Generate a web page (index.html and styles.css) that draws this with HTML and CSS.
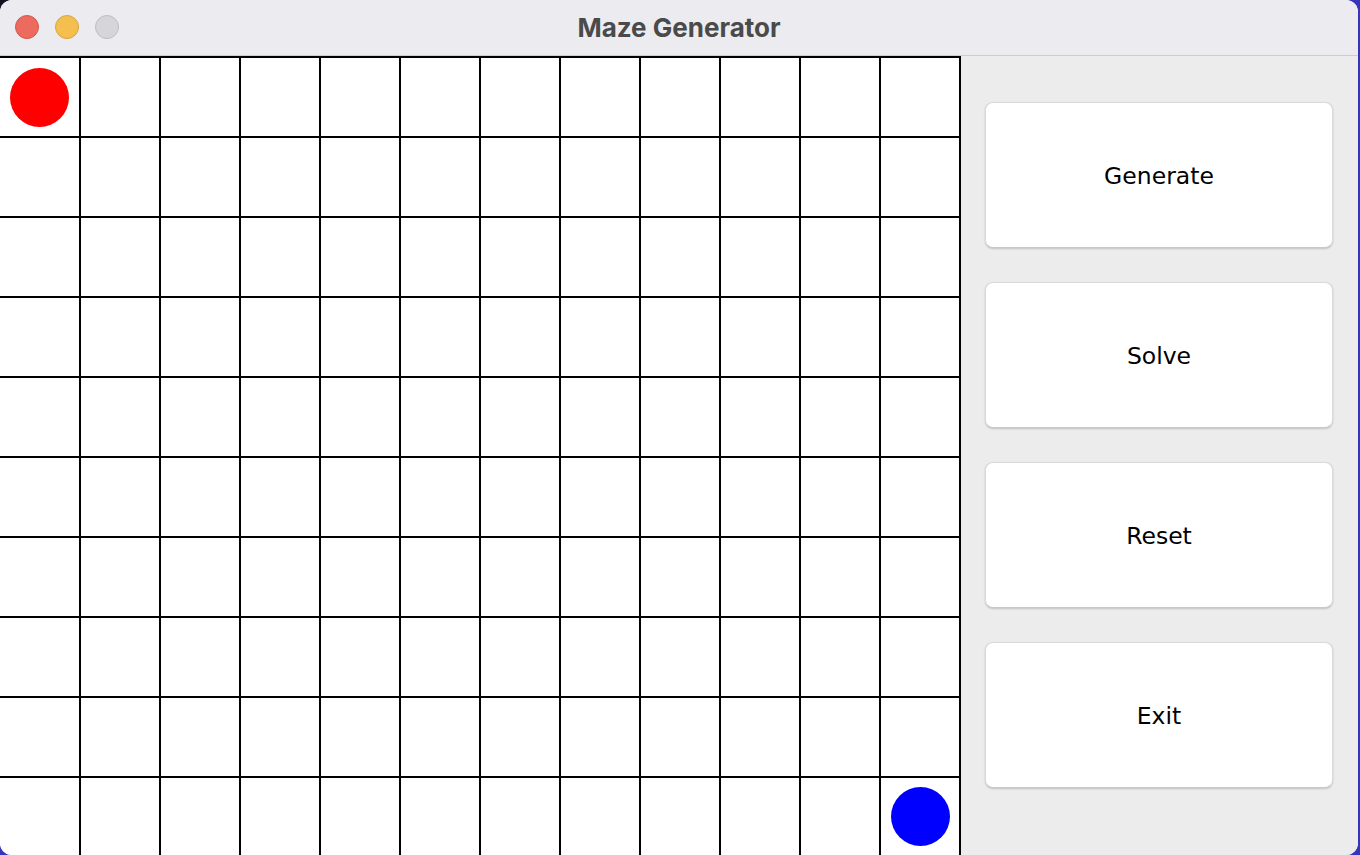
FILE: index.html
```html
<!DOCTYPE html>
<html>
<head>
<meta charset="utf-8">
<title>Maze Generator</title>
<link rel="stylesheet" href="styles.css">
</head>
<body>
<div class="window">
  <header class="titlebar">
    <div class="lights">
      <span class="light red"></span>
      <span class="light yellow"></span>
      <span class="light gray"></span>
    </div>
    <div class="title">Maze Generator</div>
  </header>
  <main class="content">
    <section class="maze" id="maze"></section>
    <aside class="panel">
      <button class="btn">Generate</button>
      <button class="btn">Solve</button>
      <button class="btn">Reset</button>
      <button class="btn">Exit</button>
    </aside>
  </main>
</div>
<script src="script.js"></script>
</body>
</html>
```

FILE: styles.css
```css
* { box-sizing: border-box; }
html, body { margin: 0; padding: 0; }
body {
  width: 1360px;
  height: 855px;
  overflow: hidden;
  background: radial-gradient(circle at 0 0, #111122 0, #111122 14px, transparent 22px), #3434bf;
  font-family: "Inter", "Liberation Sans", sans-serif;
}
.window {
  width: 1358px;
  height: 855px;
  border-radius: 12px;
  overflow: hidden;
  background: #ececec;
  display: flex;
  flex-direction: column;
}
.titlebar {
  height: 56px;
  flex: 0 0 56px;
  background: #ebebf0;
  border-bottom: 1px solid #cdcdd0;
  display: flex;
  align-items: center;
  position: relative;
}
.lights {
  display: flex;
  gap: 16px;
  padding-left: 15px;
  margin-top: -2px;
}
.light {
  width: 24px;
  height: 24px;
  border-radius: 50%;
  display: block;
}
.light.red { background: #ed6a5e; border: 1px solid #d4574b; }
.light.yellow { background: #f5bf4f; border: 1px solid #d9a43f; }
.light.gray { background: #d6d5d9; border: 1px solid #bebdc2; }
.title {
  position: absolute;
  left: 0;
  right: 0;
  top: 0;
  height: 55px;
  line-height: 55px;
  text-align: center;
  font-weight: 700;
  font-size: 26px;
  color: #4a4a4a;
  pointer-events: none;
}
.content {
  flex: 1;
  display: flex;
  min-height: 0;
}
.maze {
  width: 961px;
  flex: 0 0 961px;
  background: #fff;
  display: grid;
  grid-template-columns: 81px repeat(11, 80px);
  grid-auto-rows: 80px;
  overflow: hidden;
}
.cell {
  border-top: 2px solid #000;
  border-right: 2px solid #000;
  display: flex;
  align-items: center;
  justify-content: center;
}
.dot {
  width: 59px;
  height: 59px;
  border-radius: 50%;
}
.dot.start { background: #ff0000; }
.dot.end { background: #0000ff; margin-top: -2px; }
.panel {
  flex: 1;
  background: #ececec;
  display: flex;
  flex-direction: column;
  gap: 34px;
  padding: 46px 24px 0 24px;
}
.btn {
  height: 146px;
  width: 348px;
  background: #fff;
  border: 1px solid #dadada;
  border-bottom-color: #c8c8c8;
  border-radius: 8px;
  box-shadow: 0 1px 2px rgba(0,0,0,0.18);
  font-family: "DejaVu Sans", "Liberation Sans", sans-serif;
  font-size: 23.5px;
  color: #000;
  padding: 2px 0 0 0;
}
```

FILE: script.js
```js
var maze = document.getElementById('maze');
for (var r = 0; r < 10; r++) {
  for (var c = 0; c < 12; c++) {
    var cell = document.createElement('div');
    cell.className = 'cell';
    if (r === 0 && c === 0) {
      var d = document.createElement('div');
      d.className = 'dot start';
      cell.appendChild(d);
    }
    if (r === 9 && c === 11) {
      var e = document.createElement('div');
      e.className = 'dot end';
      cell.appendChild(e);
    }
    maze.appendChild(cell);
  }
}
```
